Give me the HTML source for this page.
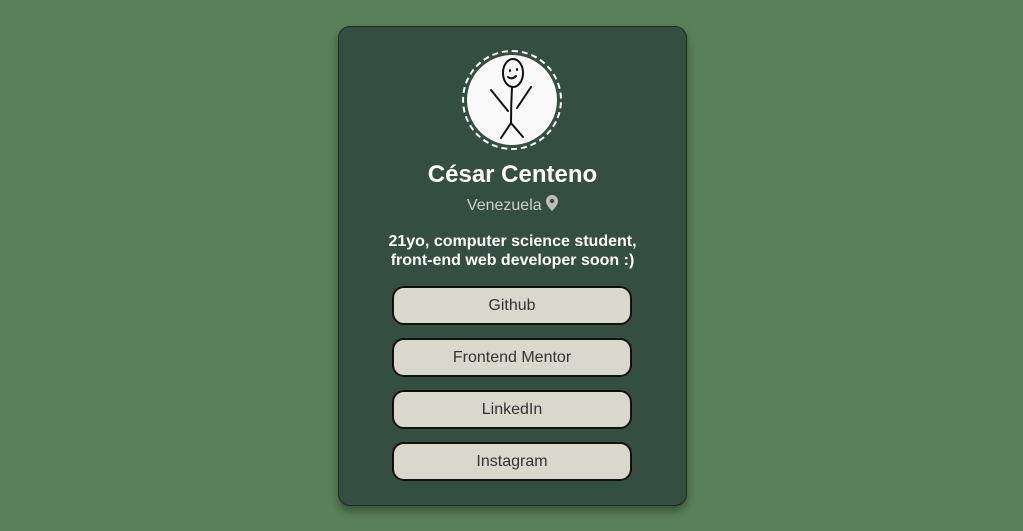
<!DOCTYPE html>
<html><head><style>
body{margin:0;width:1023px;height:531px;background:#588157;font-family:"Liberation Sans",sans-serif;position:relative;overflow:hidden}
.card{position:absolute;left:338px;top:26px;width:349px;height:480px;background:#344e41;border:1px solid #1d2b23;border-radius:12px;box-shadow:0 5px 8px rgba(0,0,0,.35);box-sizing:border-box}
.ring{position:absolute;left:462px;top:50px;width:100px;height:100px;border-radius:50%;border:2px dashed #fff;box-sizing:border-box}
.av{position:absolute;left:467px;top:55px;width:90px;height:90px;border-radius:50%;background:#fafafa}
.name{position:absolute;top:161px;left:338px;width:349px;text-align:center;color:#fff;font-weight:bold;font-size:24px}
.loc{position:absolute;top:195px;left:338px;width:349px;text-align:center;color:#cfcfcf;font-size:16px}
.bio{position:absolute;top:232px;left:338px;width:349px;text-align:center;color:#fff;font-weight:bold;font-size:16px;line-height:19px}
.btn{position:absolute;left:392px;width:240px;height:39px;background:#dad7cd;border:2px solid #111;border-radius:12px;box-sizing:border-box;text-align:center;line-height:35px;font-size:16px;color:#333}
</style></head><body>
<div class="card"></div>
<div class="ring"></div>
<div class="av"></div>
<svg style="position:absolute;left:462px;top:50px" width="100" height="100" viewBox="462 50 100 100" fill="none" stroke="#111" stroke-width="2" stroke-linecap="round">
<ellipse cx="513" cy="73" rx="10" ry="14"/><path d="M508 77q4 3 8 -1M510 70v1M517 69v1"/>
<path d="M512 87q-1 18 -1 36M511 123l-10 15M511 123l12 14M491 90l17 21M531 87l-14 21"/>
</svg>
<div class="name">César Centeno</div>
<div class="loc">Venezuela <svg width="12" height="16" viewBox="0 0 12 16" style="vertical-align:-1px"><path d="M6 0a6 6 0 0 0-6 6c0 4.5 6 10 6 10s6-5.5 6-10a6 6 0 0 0-6-6z" fill="#bdbdbd"/><circle cx="6" cy="6" r="2.2" fill="#344e41"/></svg></div>
<div class="bio">21yo, computer science student,<br>front-end web developer soon :)</div>
<div class="btn" style="top:286px">Github</div>
<div class="btn" style="top:338px">Frontend Mentor</div>
<div class="btn" style="top:390px">LinkedIn</div>
<div class="btn" style="top:442px">Instagram</div>
</body></html>
